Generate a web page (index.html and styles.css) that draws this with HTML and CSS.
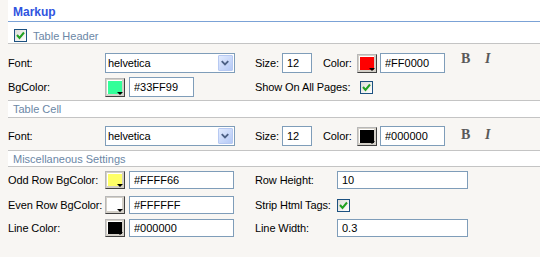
FILE: index.html
```html
<!DOCTYPE html>
<html lang="en">
<head>
    <meta charset="UTF-8">
    <title>Markup Settings</title>
    <link rel="stylesheet" href="styles.css">
</head>
<body>
    <div class="panel">
        <div class="title">Markup</div>

        <div class="band band-header">
            <span class="check"><svg width="11" height="11" viewBox="0 0 11 11"><polyline points="2,5 4.5,8 9,2.5" fill="none" stroke="#21a121" stroke-width="2"/></svg></span>
            <span class="band-text">Table Header</span>
        </div>

        <div class="row">
            <span class="lbl">Font:</span>
            <div class="col-mid">
                <div class="select">
                    <span class="select-val">helvetica</span>
                    <span class="select-btn"><svg width="15" height="16" viewBox="0 0 15 16"><polyline points="4,6 7.5,9.5 11,6" fill="none" stroke="#4d6185" stroke-width="2"/></svg></span>
                </div>
            </div>
            <div class="col-right">
                <span class="lbl-size">Size:</span>
                <input type="text" class="txt txt-size" value="12">
                <span class="lbl-color">Color:</span>
                <span class="swatch"><span class="swatch-fill" style="background:#FF0000"></span></span>
                <input type="text" class="txt txt-hex" value="#FF0000">
                <span class="fmt fmt-b">B</span>
                <span class="fmt fmt-i">I</span>
            </div>
        </div>

        <div class="row row-2">
            <span class="lbl">BgColor:</span>
            <div class="col-mid">
                <span class="swatch"><span class="swatch-fill" style="background:#33FF99"></span></span>
                <input type="text" class="txt txt-hex" value="#33FF99">
            </div>
            <div class="col-right">
                <span class="lbl-show">Show On All Pages:</span>
                <span class="check"><svg width="11" height="11" viewBox="0 0 11 11"><polyline points="2,5 4.5,8 9,2.5" fill="none" stroke="#21a121" stroke-width="2"/></svg></span>
            </div>
        </div>

        <div class="band band-cell">
            <span class="band-text">Table Cell</span>
        </div>

        <div class="row row-3">
            <span class="lbl">Font:</span>
            <div class="col-mid">
                <div class="select">
                    <span class="select-val">helvetica</span>
                    <span class="select-btn"><svg width="15" height="16" viewBox="0 0 15 16"><polyline points="4,6 7.5,9.5 11,6" fill="none" stroke="#4d6185" stroke-width="2"/></svg></span>
                </div>
            </div>
            <div class="col-right">
                <span class="lbl-size">Size:</span>
                <input type="text" class="txt txt-size" value="12">
                <span class="lbl-color">Color:</span>
                <span class="swatch"><span class="swatch-fill" style="background:#000000"></span></span>
                <input type="text" class="txt txt-hex" value="#000000">
                <span class="fmt fmt-b">B</span>
                <span class="fmt fmt-i">I</span>
            </div>
        </div>

        <div class="band band-misc">
            <span class="band-text">Miscellaneous Settings</span>
        </div>

        <div class="row row-misc row-odd">
            <span class="lbl">Odd Row BgColor:</span>
            <div class="col-mid">
                <span class="swatch"><span class="swatch-fill" style="background:#FFFF66"></span></span>
                <input type="text" class="txt txt-long" value="#FFFF66">
            </div>
            <div class="col-right">
                <span class="lbl-misc">Row Height:</span>
                <input type="text" class="txt txt-wide" value="10">
            </div>
        </div>

        <div class="row row-misc row-even">
            <span class="lbl">Even Row BgColor:</span>
            <div class="col-mid">
                <span class="swatch"><span class="swatch-fill" style="background:#FFFFFF"></span></span>
                <input type="text" class="txt txt-long" value="#FFFFFF">
            </div>
            <div class="col-right">
                <span class="lbl-misc">Strip Html Tags:</span>
                <span class="check"><svg width="11" height="11" viewBox="0 0 11 11"><polyline points="2,5 4.5,8 9,2.5" fill="none" stroke="#21a121" stroke-width="2"/></svg></span>
            </div>
        </div>

        <div class="row row-misc row-line">
            <span class="lbl">Line Color:</span>
            <div class="col-mid">
                <span class="swatch"><span class="swatch-fill" style="background:#000000"></span></span>
                <input type="text" class="txt txt-long" value="#000000">
            </div>
            <div class="col-right">
                <span class="lbl-misc">Line Width:</span>
                <input type="text" class="txt txt-wide" value="0.3">
            </div>
        </div>
    </div>
</body>
</html>
```

FILE: styles.css
```css
body {
    background-color: #f8f6f3; /* pale XP dialog background */
    font-family: "Liberation Sans", Arial, sans-serif;
    font-size: 11px;
    color: #000;
    margin: 0;
    padding: 0;
}

.panel {
    margin-left: 8px;
}

.title {
    background-color: #fff;
    height: 17px;
    line-height: 17px;
    padding: 4px 0 0 5px;
    border-bottom: 1px solid #7ba2d6;
    font-size: 12px;
    font-weight: bold;
    color: #2f54e0;
}

/* white section bands */
.band {
    background-color: #fff;
    display: flex;
    align-items: center;
    border-bottom: 1px solid #c4c4c4;
}

.band-header {
    height: 16px;
    padding: 5px 0 0 6px;
}

.band-header .band-text {
    margin-left: 6px;
    padding-top: 2px;
}

.band-cell, .band-misc {
    border-top: 1px solid #c4c4c4;
    padding-left: 5px;
    margin-top: 3px;
}

.band-cell {
    height: 16px;
}

.band-misc {
    height: 15px;
    margin-top: 4px;
}

.band-text {
    color: #6b87a6;
    font-size: 11px;
}

/* form rows */
.row {
    display: grid;
    grid-template-columns: 97px 150px 1fr;
    align-items: center;
    height: 20px;
    margin-top: 9px;
    letter-spacing: -0.1px;
}

.row-2 {
    margin-top: 4px;
}

.row-3 {
    margin-top: 8px;
}

.row-misc {
    height: 18px;
}

.row-odd {
    margin-top: 4px;
}

.row-even {
    margin-top: 7px;
}

.row-line {
    margin-top: 5px;
}

.col-mid, .col-right {
    display: flex;
    align-items: center;
    height: 100%;
}

.lbl-size {
    width: 27px;
}

.lbl-color {
    width: 34px;
    margin-left: 11px;
}

.lbl-show {
    width: 105px;
}

.lbl-misc {
    width: 82px;
}

.txt {
    box-sizing: border-box;
    height: 20px;
    border: 1px solid #7f9db9;
    background-color: #fff;
    padding: 0 4px;
    margin: 0;
    font-family: inherit;
    font-size: 11px;
    color: #000;
    outline: none;
}

.row-misc .txt {
    height: 18px;
}

.txt-size {
    width: 30px;
}

.txt-hex {
    width: 65px;
    margin-left: 3px;
}

.col-mid .txt-hex {
    margin-left: 4px;
}

.txt-long {
    width: 105px;
    margin-left: 4px;
}

.txt-wide {
    width: 131px;
}

/* fake dropdown */
.select {
    box-sizing: border-box;
    width: 130px;
    height: 20px;
    border: 1px solid #7f9db9;
    background-color: #fff;
    display: flex;
    align-items: center;
    justify-content: space-between;
    padding-left: 2px;
}

.select-btn {
    width: 15px;
    height: 16px;
    margin-right: 1px;
    box-sizing: border-box;
    border: 1px solid #b7c9f2;
    border-radius: 1px;
    background: linear-gradient(135deg, #e2ebfe, #b5c9f6);
    display: flex;
}

.select-btn svg {
    margin: -1px 0 0 -1px;
}

/* colour picker button */
.swatch {
    position: relative;
    box-sizing: border-box;
    width: 20px;
    height: 19px;
    border: 1px solid;
    border-color: #b8b8b8 #404040 #404040 #b8b8b8;
    background-color: #d4d0c8;
    padding: 1px 2px 2px 1px;
    display: flex;
}

.row-misc .swatch {
    height: 18px;
}

.swatch-fill {
    flex: 1;
    border-top: 1px solid #fff;
    border-left: 1px solid #fff;
}

.swatch::after {
    content: "";
    position: absolute;
    right: 1px;
    bottom: 1px;
    border-left: 3px solid transparent;
    border-right: 3px solid transparent;
    border-top: 3px solid #000;
}

/* bold / italic toggles */
.fmt {
    font-family: "Liberation Serif", "Times New Roman", serif;
    font-size: 14px;
    font-weight: bold;
    color: #595959;
    align-self: flex-start;
    line-height: 12px;
}

.fmt-b {
    width: 24px;
    margin-left: 16px;
}

.fmt-i {
    font-style: italic;
}

.row-3 .fmt {
    margin-top: 3px;
}

/* checkbox */
.check {
    box-sizing: border-box;
    width: 13px;
    height: 13px;
    border: 1px solid #1c5180;
    background: linear-gradient(135deg, #dcdcd7, #fff);
    display: flex;
    align-items: center;
    justify-content: center;
}
```
